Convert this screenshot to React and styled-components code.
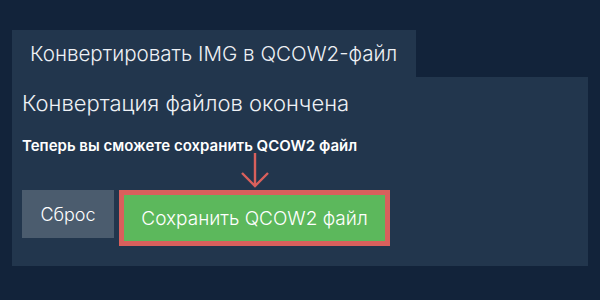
import React from "react";
import styled, { createGlobalStyle } from "styled-components";

const GlobalStyle = createGlobalStyle`
  html, body {
    margin: 0;
    padding: 0;
    background: #12233a;
  }
  body {
    font-family: Inter, Roboto, "Liberation Sans", sans-serif;
  }
`;

// PAGE
const Page = styled.div`
  width: 600px;
  height: 300px;
  box-sizing: border-box;
  padding: 30px 12px 0;
  background: #12233a;
`;

// TAB
const Tab = styled.div`
  width: 404px;
  height: 47px;
  box-sizing: border-box;
  padding-left: 18px;
  display: flex;
  align-items: center;
  background: #22364d;
  color: #eef1f5;
  font-size: 20.6px;
  font-weight: 300;
  white-space: nowrap;
`;

// PANEL
const Panel = styled.div`
  width: 576px;
  height: 189px;
  box-sizing: border-box;
  padding: 12px 10px 0;
  background: #22364d;
  display: flex;
  flex-direction: column;
`;

const Title = styled.h2`
  margin: 0;
  font-size: 22px;
  font-weight: 300;
  line-height: 28px;
  color: #eef1f5;
  white-space: nowrap;
`;

const Subtitle = styled.p`
  margin: 20px 0 0;
  font-size: 15px;
  font-weight: 600;
  line-height: 18px;
  color: #ffffff;
  white-space: nowrap;
`;

// BUTTONS
const Actions = styled.div`
  margin-top: 35px;
  display: flex;
  align-items: flex-start;
  gap: 5px;
`;

const ResetButton = styled.button`
  width: 92px;
  height: 48px;
  border: none;
  background: #4b5c6e;
  color: #ffffff;
  font-family: inherit;
  font-size: 18px;
  font-weight: 300;
  padding: 0;
`;

const SaveWrap = styled.div`
  position: relative;
  border: 5px solid #d9605c;
`;

const SaveButton = styled.button`
  display: block;
  width: 261px;
  height: 46px;
  border: none;
  background: #5cb85c;
  color: #ffffff;
  font-family: inherit;
  font-size: 19px;
  font-weight: 300;
  padding: 0;
  white-space: nowrap;
`;

// ARROW POINTING AT THE SAVE BUTTON
const Arrow = styled.svg`
  display: block;
  position: absolute;
  left: 50%;
  bottom: 100%;
  margin-bottom: 7px;
  transform: translateX(-50%);
`;

export default function App() {
  return (
    <>
      <GlobalStyle />
      <Page>
        <Tab>Конвертировать IMG в QCOW2-файл</Tab>
        <Panel>
          <Title>Конвертация файлов окончена</Title>
          <Subtitle>Теперь вы сможете сохранить QCOW2 файл</Subtitle>
          <Actions>
            <ResetButton>Сброс</ResetButton>
            <SaveWrap>
              <Arrow width="30" height="35" viewBox="0 0 30 35">
                <path
                  d="M15 0 V33 M2 20 L15 33 L28 20"
                  fill="none"
                  stroke="#d9605c"
                  strokeWidth="2.4"
                />
              </Arrow>
              <SaveButton>Сохранить QCOW2 файл</SaveButton>
            </SaveWrap>
          </Actions>
        </Panel>
      </Page>
    </>
  );
}
